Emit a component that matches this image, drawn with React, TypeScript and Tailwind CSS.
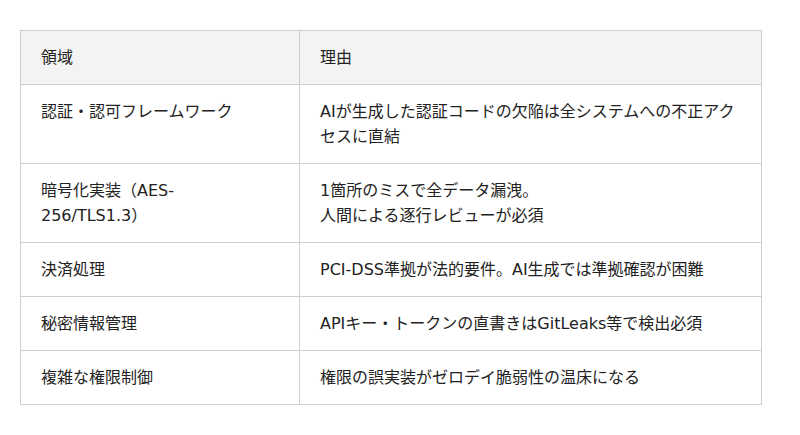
import React from 'react';

const rows: [React.ReactNode, React.ReactNode][] = [
    ['認証・認可フレームワーク', 'AIが生成した認証コードの欠陥は全システムへの不正アクセスに直結'],
    [
        <>
            暗号化実装（AES-
            <br />
            256/TLS1.3）
        </>,
        <>
            1箇所のミスで全データ漏洩。
            <br />
            人間による逐行レビューが必須
        </>,
    ],
    ['決済処理', 'PCI-DSS準拠が法的要件。AI生成では準拠確認が困難'],
    ['秘密情報管理', 'APIキー・トークンの直書きはGitLeaks等で検出必須'],
    ['複雑な権限制御', '権限の誤実装がゼロデイ脆弱性の温床になる'],
];

const cell = 'border border-[#cfcfcf] px-5 py-[14px] text-left align-top font-normal';

export default function App() {
    return (
        <div className="min-h-[435px] bg-white pl-5 pt-[30px] font-['DejaVu_Sans','Noto_Sans_CJK_JP',sans-serif] text-[16px] leading-[25px] text-[#222]">
            <table className="w-[742px] table-fixed border-collapse">
                <colgroup>
                    <col className="w-[279px]" />
                    <col />
                </colgroup>
                <thead>
                    <tr className="bg-[#f3f3f3]">
                        <th className={cell}>領域</th>
                        <th className={cell}>理由</th>
                    </tr>
                </thead>
                <tbody>
                    {rows.map(([area, reason], i) => (
                        <tr key={i}>
                            <td className={cell}>{area}</td>
                            <td className={cell}>{reason}</td>
                        </tr>
                    ))}
                </tbody>
            </table>
        </div>
    );
}
